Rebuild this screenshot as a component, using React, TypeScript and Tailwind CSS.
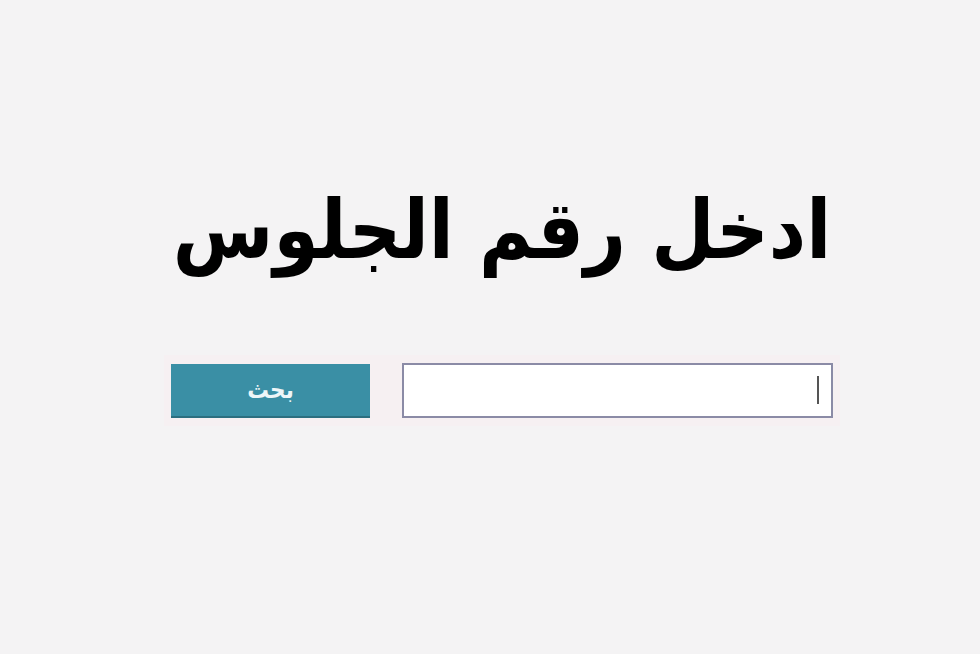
export default function App() {
  return (
    <div
      dir="rtl"
      className="flex h-[654px] w-[980px] flex-col items-center bg-[#f4f3f4] pl-[24px]"
      style={{ fontFamily: '"DejaVu Sans Condensed", "DejaVu Sans", sans-serif' }}
    >
      <h1 className="mt-[170px] text-[81px] font-bold leading-[120px] text-black">
        ادخل رقم الجلوس
      </h1>
      <form
        className="mt-[65px] flex items-center gap-[32px] bg-[#f6f0f2] px-[7px] py-[8px]"
        onSubmit={(e) => e.preventDefault()}
      >
        <div className="relative">
          <input
            type="text"
            className="h-[55px] w-[431px] border-2 border-[#8b8ba6] bg-white px-3 outline-none"
          />
          <span className="absolute right-[14px] top-[13px] h-[28px] w-[2px] bg-[#555]" />
        </div>
        <button
          type="submit"
          className="h-[54px] w-[199px] border-b-2 border-[#2c6f80] bg-[#3a8fa5] text-[24px] font-bold text-[#eef6f8]"
        >
          بحث
        </button>
      </form>
    </div>
  );
}
